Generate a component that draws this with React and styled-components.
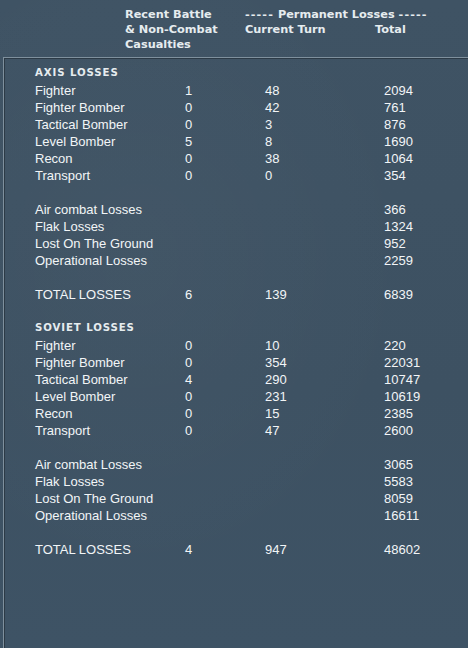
import React from "react";
import styled, { createGlobalStyle } from "styled-components";

const Global = createGlobalStyle`
  html, body { margin: 0; padding: 0; background: #3e5263; }
  body { width: 468px; height: 648px; overflow: hidden; }
`;

const Page = styled.div`
  width: 468px;
  height: 648px;
  background:
    radial-gradient(ellipse at 30% 40%, rgba(255,255,255,0.025), transparent 60%),
    linear-gradient(180deg, #3f5364 0%, #3d5162 60%, #3e5365 100%);
  color: #f2f5f7;
  display: flex;
  flex-direction: column;
`;

const Header = styled.div`
  height: 57px;
  box-sizing: border-box;
  padding-top: 7px;
  display: grid;
  grid-template-columns: 125px 120px 130px 1fr;
  grid-auto-rows: 15px;
  align-content: start;
  font-family: "DejaVu Sans", Verdana, sans-serif;
  font-weight: bold;
  font-size: 11.3px;
  line-height: 15px;
  color: #e6ecef;
`;

const HeadCell = styled.div`
  grid-column: ${(p) => p.$col};
  grid-row: ${(p) => p.$row};
  white-space: nowrap;
`;

const Dashes = styled.span`
  letter-spacing: 1.1px;
`;

const Panel = styled.div`
  flex: 1;
  margin-left: 3px;
  border-top: 1px solid #7f909d;
  border-left: 1px solid #7f909d;
  box-shadow: inset 1px 1px 0 #2c3a46;
  padding: 7px 0 0 31px;
  font-family: "Liberation Sans", Arial, sans-serif;
  font-size: 13px;
  color: #f2f5f7;
`;

const SectionTitle = styled.div`
  font-family: "DejaVu Sans", Verdana, sans-serif;
  font-weight: bold;
  font-size: 10.2px;
  letter-spacing: 0.9px;
  line-height: 16px;
  height: ${(p) => p.$h}px;
  color: #e6ecef;
`;

const Row = styled.div`
  display: grid;
  grid-template-columns: 150px 80px 119px 1fr;
  height: 17px;
  line-height: 17px;
  white-space: nowrap;
`;

const Gap = styled.div`
  height: ${(p) => p.$h || 17}px;
`;

const Section = styled.div`
  display: flex;
  flex-direction: column;
`;

const axis = {
  types: [
    ["Fighter", "1", "48", "2094"],
    ["Fighter Bomber", "0", "42", "761"],
    ["Tactical Bomber", "0", "3", "876"],
    ["Level Bomber", "5", "8", "1690"],
    ["Recon", "0", "38", "1064"],
    ["Transport", "0", "0", "354"],
  ],
  causes: [
    ["Air combat Losses", "366"],
    ["Flak Losses", "1324"],
    ["Lost On The Ground", "952"],
    ["Operational Losses", "2259"],
  ],
  total: ["6", "139", "6839"],
};

const soviet = {
  types: [
    ["Fighter", "0", "10", "220"],
    ["Fighter Bomber", "0", "354", "22031"],
    ["Tactical Bomber", "4", "290", "10747"],
    ["Level Bomber", "0", "231", "10619"],
    ["Recon", "0", "15", "2385"],
    ["Transport", "0", "47", "2600"],
  ],
  causes: [
    ["Air combat Losses", "3065"],
    ["Flak Losses", "5583"],
    ["Lost On The Ground", "8059"],
    ["Operational Losses", "16611"],
  ],
  total: ["4", "947", "48602"],
};

function LossSection({ title, data, titleH }) {
  return (
    <Section>
      <SectionTitle $h={titleH}>{title}</SectionTitle>
      {data.types.map((r) => (
        <Row key={r[0]}>
          <span>{r[0]}</span>
          <span>{r[1]}</span>
          <span>{r[2]}</span>
          <span>{r[3]}</span>
        </Row>
      ))}
      <Gap />
      {data.causes.map((r) => (
        <Row key={r[0]}>
          <span>{r[0]}</span>
          <span />
          <span />
          <span>{r[1]}</span>
        </Row>
      ))}
      <Gap />
      <Row>
        <span>TOTAL LOSSES</span>
        <span>{data.total[0]}</span>
        <span>{data.total[1]}</span>
        <span>{data.total[2]}</span>
      </Row>
    </Section>
  );
}

export default function App() {
  return (
    <>
      <Global />
      <Page>
        <Header>
          <HeadCell $col={2} $row={1}>Recent Battle</HeadCell>
          <HeadCell $col={2} $row={2}>&amp; Non-Combat</HeadCell>
          <HeadCell $col={2} $row={3}>Casualties</HeadCell>
          <HeadCell $col="3 / 5" $row={1}>
            <Dashes>-----</Dashes> Permanent Losses <Dashes>-----</Dashes>
          </HeadCell>
          <HeadCell $col={3} $row={2}>Current Turn</HeadCell>
          <HeadCell $col={4} $row={2}>Total</HeadCell>
        </Header>
        <Panel>
          <LossSection title="AXIS LOSSES" data={axis} titleH={17} />
          <Gap $h={17} />
          <LossSection title="SOVIET LOSSES" data={soviet} titleH={17} />
        </Panel>
      </Page>
    </>
  );
}
